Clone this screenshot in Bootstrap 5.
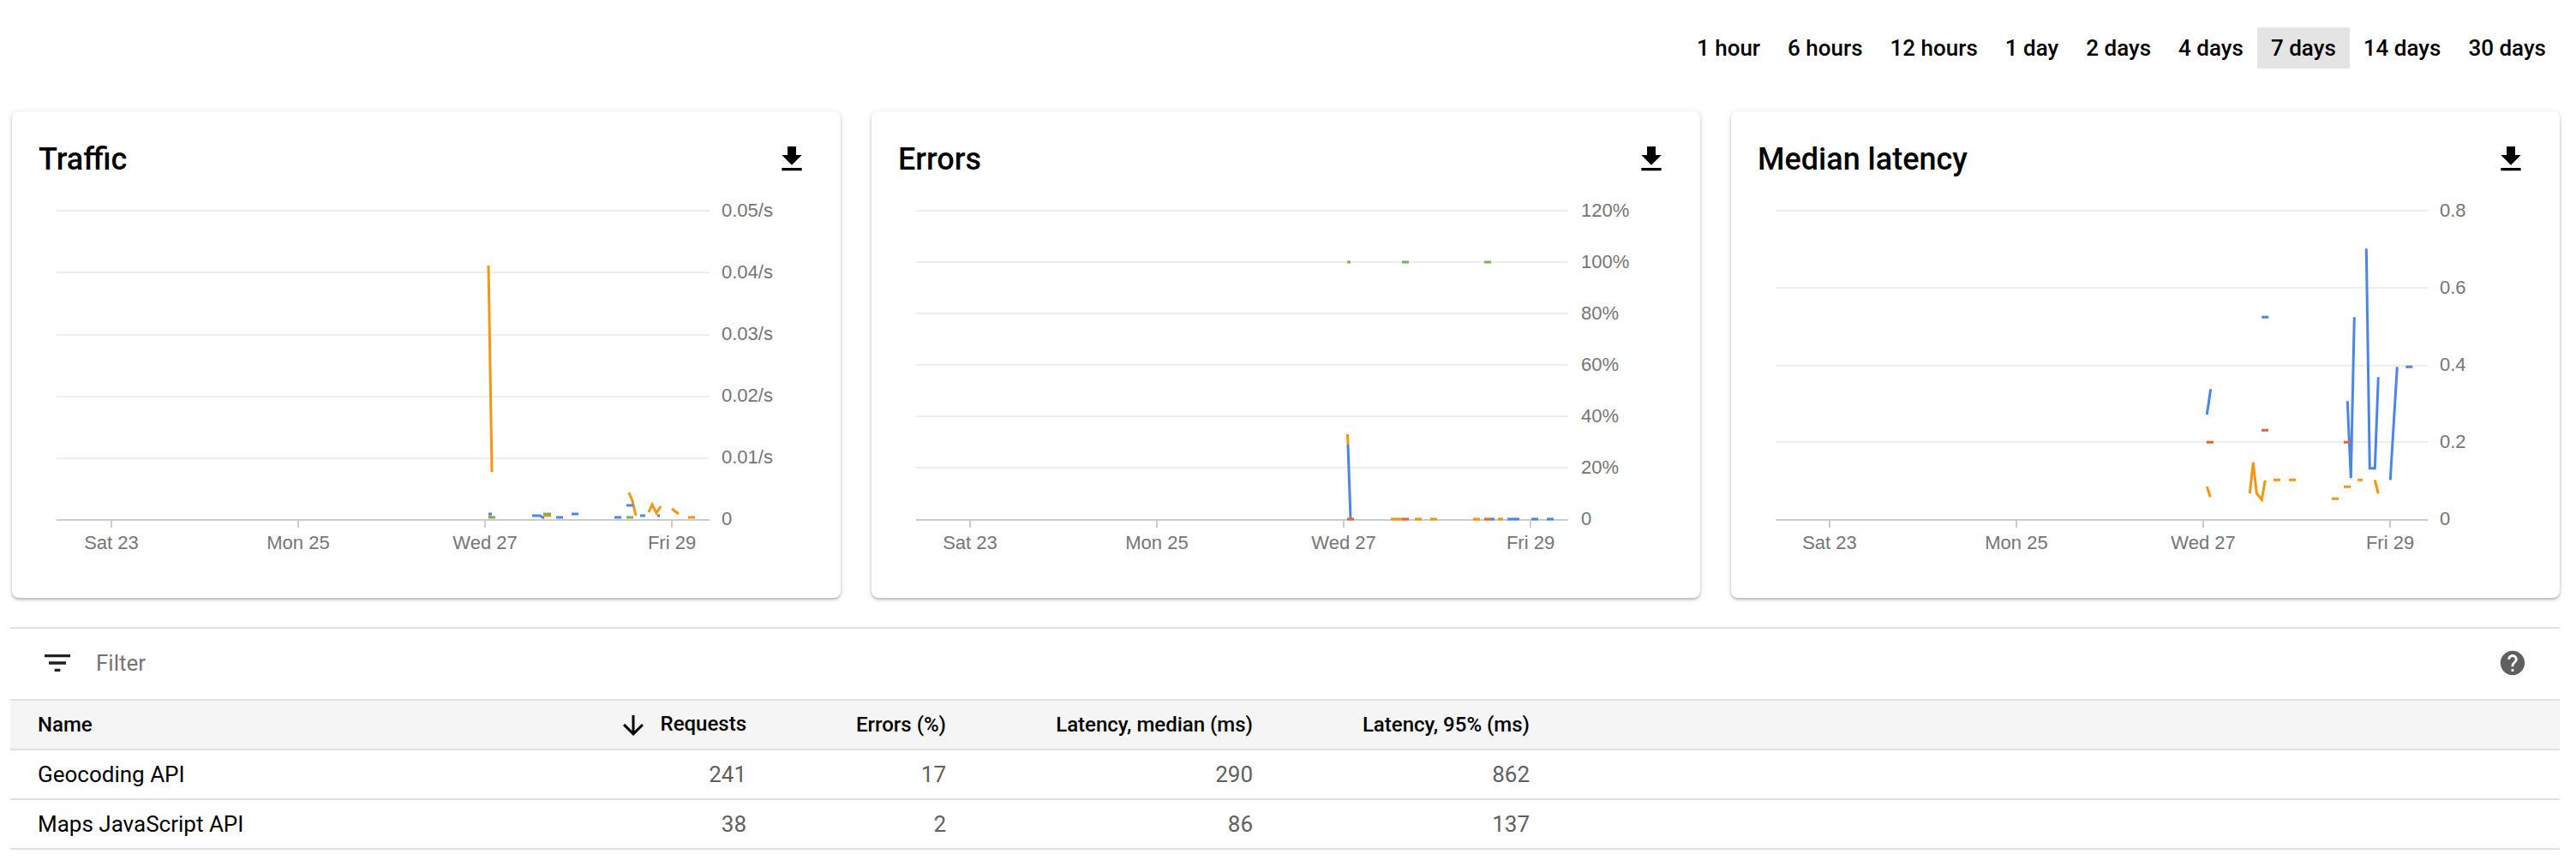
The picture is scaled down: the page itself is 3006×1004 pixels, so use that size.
<!DOCTYPE html>
<html lang="en">
<head>
<meta charset="utf-8">
<title>APIs dashboard</title>
<link href="https://cdn.jsdelivr.net/npm/bootstrap@5.3.0/dist/css/bootstrap.min.css" rel="stylesheet">
<style>
html,body{background:#fff;overflow:hidden}
body{font-family:Roboto,"Liberation Sans",sans-serif;color:#000}
.dash-page{padding:32px 19px 0 12px}
.range-btn{font-family:Roboto,sans-serif;font-weight:500;font-size:26px;line-height:48px;height:48px;padding:0 16px;border:0;border-radius:0;color:#000;background:transparent}
.range-btn.active,.range-btn:hover{background:#e4e4e4;color:#000}
.chart-row{margin-top:50px;padding-left:2px;gap:36px}
.chart-card{flex:1 1 0;height:568px;border:0;border-radius:8px;box-shadow:0 2px 3px rgba(60,64,67,.32),0 1px 6px 1px rgba(60,64,67,.1)}
.chart-head{height:100px;padding:36px 37px 24px 31px}
.chart-title{font-size:36px;font-weight:500;line-height:40px;margin:0;color:#000}
.ico-40{width:40px;height:40px;display:block;fill:#000}
.chart-svg{display:block;width:967px;height:468px}
.chart-svg text{font-family:"Liberation Sans",Arial,sans-serif;font-size:22px;fill:#757575}
.gl{stroke:#eee;stroke-width:2}
.gb{stroke:#ccc;stroke-width:2}
.s{fill:none;stroke-width:3}
.blue{stroke:#4a86e8}.org{stroke:#f6950e}.red{stroke:#e8603c}.grn{stroke:#7cb054}
.filter-row{margin-top:34px;height:84px;border-top:2px solid #e0e0e0;padding:0 38px 2px 35px;gap:25px}
.filter-ico{fill:#212121}
.filter-txt{font-size:26px;color:#757575}
.help-ico{width:34px;height:34px;fill:#5f5f5f}
.stat-table{table-layout:fixed;width:100%;margin:0;border-collapse:collapse;font-size:26px}
.stat-table th,.stat-table td{padding:0 33px;height:58px;border-bottom:2px solid #e0e0e0;vertical-align:middle;text-align:right;box-shadow:none}
.stat-table thead th{background:#f5f5f5;font-weight:500;font-size:24px;color:#000;border-top:2px solid #e0e0e0}
.stat-table .nm{text-align:left;color:#000;padding-left:32px}
.stat-table td{color:#5f5f5f}
.stat-table td.nm{color:#000}
.c0{width:638px}.c1{width:254px}.c2{width:233px}.c3{width:358px}.c4{width:323px}
.sort-ico{width:36px;height:36px;fill:#000;margin-right:14px;vertical-align:middle}
</style>
</head>
<body>
<div class="dash-page">
  <div class="d-flex justify-content-end" role="group">
    <button type="button" class="btn range-btn">1 hour</button>
    <button type="button" class="btn range-btn">6 hours</button>
    <button type="button" class="btn range-btn">12 hours</button>
    <button type="button" class="btn range-btn">1 day</button>
    <button type="button" class="btn range-btn">2 days</button>
    <button type="button" class="btn range-btn">4 days</button>
    <button type="button" class="btn range-btn active">7 days</button>
    <button type="button" class="btn range-btn">14 days</button>
    <button type="button" class="btn range-btn">30 days</button>
  </div>

  <div class="d-flex chart-row">
    <div class="card chart-card">
      <div class="d-flex justify-content-between align-items-center chart-head">
        <h2 class="chart-title">Traffic</h2>
        <svg class="ico-40" viewBox="0 0 24 24"><path d="M19 9h-4V3H9v6H5l7 7 7-7zM5 18v2h14v-2H5z"/></svg>
      </div>
      <svg class="chart-svg" viewBox="14 230 967 468">
        <path class="gl" d="M66 246H828M66 318H828M66 391H828M66 463H828M66 535H828"/>
        <path class="gb" d="M66 607H828M130 607v9M348 607v9M566 607v9M784 607v9"/>
        <text x="842" y="253">0.05/s</text><text x="842" y="325">0.04/s</text><text x="842" y="397">0.03/s</text><text x="842" y="469">0.02/s</text><text x="842" y="541">0.01/s</text><text x="842" y="613">0</text>
        <text x="130" y="641" text-anchor="middle">Sat 23</text><text x="348" y="641" text-anchor="middle">Mon 25</text><text x="566" y="641" text-anchor="middle">Wed 27</text><text x="784" y="641" text-anchor="middle">Fri 29</text>
        <path class="s org" d="M570 310L574 551M734 575L738 585L742 602M757 598L761 589L766 599L771 591M784 594L792 600M803 604H811M570 602L574 604"/>
        <path class="s blue" d="M570 600H574M621 602H630L635 605M649 604H657M667 600H675M717 604H725M731 590H739M747 602H753M767 602H770"/>
        <path class="s org" d="M634 602H643"/>
        <path class="s grn" d="M570 604H578M634 600H643M731 604H739"/>
      </svg>
    </div>

    <div class="card chart-card">
      <div class="d-flex justify-content-between align-items-center chart-head">
        <h2 class="chart-title">Errors</h2>
        <svg class="ico-40" viewBox="0 0 24 24"><path d="M19 9h-4V3H9v6H5l7 7 7-7zM5 18v2h14v-2H5z"/></svg>
      </div>
      <svg class="chart-svg" viewBox="1017 230 967 468">
        <path class="gl" d="M1069 246H1830M1069 306H1830M1069 366H1830M1069 426H1830M1069 486H1830M1069 546H1830"/>
        <path class="gb" d="M1069 607H1830M1132 607v9M1350 607v9M1568 607v9M1786 607v9"/>
        <text x="1845" y="253">120%</text><text x="1845" y="313">100%</text><text x="1845" y="373">80%</text><text x="1845" y="433">60%</text><text x="1845" y="493">40%</text><text x="1845" y="553">20%</text><text x="1845" y="613">0</text>
        <text x="1132" y="641" text-anchor="middle">Sat 23</text><text x="1350" y="641" text-anchor="middle">Mon 25</text><text x="1568" y="641" text-anchor="middle">Wed 27</text><text x="1786" y="641" text-anchor="middle">Fri 29</text>
        <path class="s grn" d="M1572 306H1576M1636 306H1644M1732 306H1740"/>
        <path class="s org" d="M1572.5 507L1573 519M1623 606H1636M1651 606H1659M1669 606H1677M1719 606H1727M1748 606H1754"/>
        <path class="s blue" d="M1573 519L1576 606M1740 606H1744M1759 606H1773M1787 606H1795M1805 606H1813"/>
        <path class="s red" d="M1572 606H1580M1636 606H1644M1732 606H1740"/>
      </svg>
    </div>

    <div class="card chart-card">
      <div class="d-flex justify-content-between align-items-center chart-head">
        <h2 class="chart-title">Median latency</h2>
        <svg class="ico-40" viewBox="0 0 24 24"><path d="M19 9h-4V3H9v6H5l7 7 7-7zM5 18v2h14v-2H5z"/></svg>
      </div>
      <svg class="chart-svg" viewBox="2020 230 967 468">
        <path class="gl" d="M2072 246H2833M2072 336H2833M2072 427H2833M2072 516H2833"/>
        <path class="gb" d="M2072 607H2833M2135 607v9M2353 607v9M2571 607v9M2789 607v9"/>
        <text x="2847" y="253">0.8</text><text x="2847" y="343">0.6</text><text x="2847" y="433">0.4</text><text x="2847" y="523">0.2</text><text x="2847" y="613">0</text>
        <text x="2135" y="641" text-anchor="middle">Sat 23</text><text x="2353" y="641" text-anchor="middle">Mon 25</text><text x="2571" y="641" text-anchor="middle">Wed 27</text><text x="2789" y="641" text-anchor="middle">Fri 29</text>
        <path class="s blue" d="M2575.3 484L2579.7 454.3M2639.3 370.3H2647.3M2739.3 468.3L2743.3 558.3L2747.3 370.3M2761.3 290.3L2765.3 546.7H2771.3L2775.3 440.3M2789.3 560.3L2797.3 428.3M2807.3 428.3H2815.3"/>
        <path class="s red" d="M2575 516.3H2583M2639 502.3H2647M2735 516.3H2743"/>
        <path class="s org" d="M2575.3 568.3L2579.3 580.3M2625.3 576L2629.3 540L2633.3 576L2639.3 583.3L2643.3 560.7M2653 560.3H2661M2671 560.3H2679M2721 582.3H2729M2735 568.3H2743M2751 560.3H2757M2771.3 560.3L2775.3 576.3"/>
      </svg>
    </div>
  </div>

  <div class="d-flex align-items-center filter-row">
    <svg class="ico-40 filter-ico" viewBox="0 0 24 24"><path d="M10 18h4v-2h-4v2zM3 6v2h18V6H3zm3 7h12v-2H6v2z"/></svg>
    <span class="filter-txt flex-grow-1">Filter</span>
    <svg class="ico-40 help-ico" viewBox="0 0 24 24"><path d="M12 2C6.48 2 2 6.48 2 12s4.48 10 10 10 10-4.48 10-10S17.52 2 12 2zm1 17h-2v-2h2v2zm2.07-7.75l-.9.92C13.45 12.9 13 13.5 13 15h-2v-.5c0-1.1.45-2.1 1.17-2.83l1.24-1.26c.37-.36.59-.86.59-1.41 0-1.1-.9-2-2-2s-2 .9-2 2H8c0-2.21 1.79-4 4-4s4 1.79 4 4c0 .88-.36 1.68-.93 2.25z"/></svg>
  </div>

  <table class="table stat-table">
    <colgroup><col class="c0"><col class="c1"><col class="c2"><col class="c3"><col class="c4"><col></colgroup>
    <thead>
      <tr><th class="nm">Name</th><th class="text-nowrap"><svg class="sort-ico" viewBox="0 0 24 24"><path d="M20 12l-1.41-1.41L13 16.17V4h-2v12.17l-5.58-5.59L4 12l8 8 8-8z"/></svg>Requests</th><th>Errors (%)</th><th>Latency, median (ms)</th><th>Latency, 95% (ms)</th><th></th></tr>
    </thead>
    <tbody>
      <tr><td class="nm">Geocoding API</td><td>241</td><td>17</td><td>290</td><td>862</td><td></td></tr>
      <tr><td class="nm">Maps JavaScript API</td><td>38</td><td>2</td><td>86</td><td>137</td><td></td></tr>
    </tbody>
  </table>
</div>
<script src="https://cdn.jsdelivr.net/npm/bootstrap@5.3.0/dist/js/bootstrap.bundle.min.js"></script>
</body>
</html>
